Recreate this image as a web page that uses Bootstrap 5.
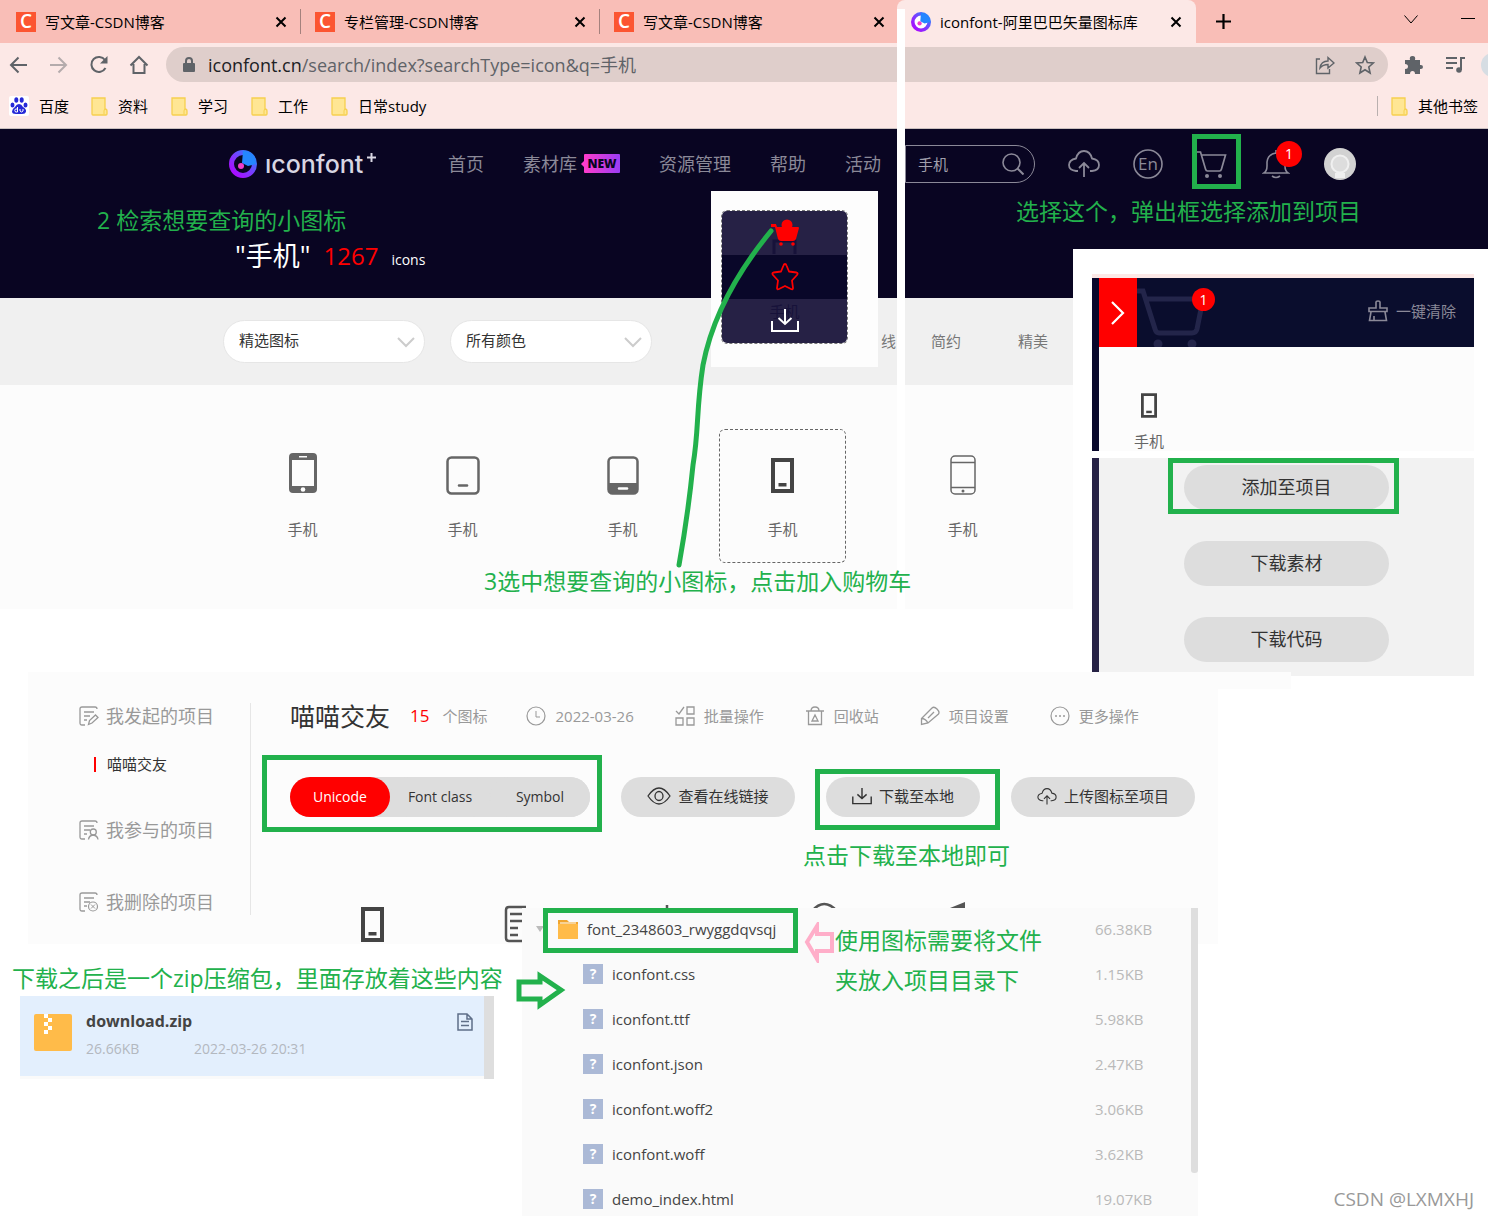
<!DOCTYPE html>
<html lang="zh-CN">
<head>
<meta charset="utf-8">
<meta name="viewport" content="width=device-width, initial-scale=1">
<title>iconfont-阿里巴巴矢量图标库</title>
<link rel="stylesheet" href="https://cdn.jsdelivr.net/npm/bootstrap@5.3.0/dist/css/bootstrap.min.css">
<style>
:root{--pen:#22b14c;--ink:#090522;--mute:#999;--pill:#ddd}
body{font-family:"Open Sans","Noto Sans CJK SC",sans-serif;font-size:15px;line-height:20px;color:#333;background:#fff;overflow-x:hidden}
a{color:inherit;text-decoration:none}
svg{display:block;flex:none}
.ln{fill:none;stroke:currentColor}
.board{min-height:1216px;overflow:hidden}
.plain{border:0;background:none;padding:0;color:inherit}
/* browser frame */
.tabstrip{background:#f9beb7;height:43px;color:#000}
.btab{flex:0 1 299px;height:43px;padding:0 12px 0 16px;gap:9px;position:relative}
.btab+.btab:not(.on)::before{content:"";position:absolute;left:1px;top:9px;height:25px;width:1px;background:#a5817d}
.btab.on{background:#fce8e6;border-radius:8px 8px 0 0;padding:0 14px}
.fav{width:20px;height:20px;background:#fc5531;color:#fff;font-weight:600;font-size:19px;line-height:19px;text-align:center}
.toolbar{background:#fce8e6;height:43px;padding:0 0 0 9px;color:#5f6368}
.urlbox{background:#dfcecb;border-radius:18px;height:35px;padding:0 13px 0 16px;margin-left:17px;font-size:18px}
.bookmarks{background:#fce8e6;height:43px;border-bottom:1px solid #c9bfbe;padding:0 10px 2px 9px;color:#000}
.bookmarks a{display:flex;align-items:center;width:80px;gap:10px;white-space:nowrap}
.bookmarks a+a{padding-left:2px}
/* site header */
.hero{background:var(--ink);height:169px;color:#8b8998;font-size:18px}
.heronav{height:69px;padding-left:229px}
.brand{font-family:Inter,sans-serif;font-weight:500;font-size:25px;line-height:30px;color:#d8d6e2;width:149px}
.newtag{background:linear-gradient(90deg,#ff3ccb,#9a3df5);color:var(--ink);font-size:12px;font-weight:800;line-height:19px;width:36px;text-align:center;border-radius:1px;position:relative}
.newtag::before{content:"";position:absolute;left:-3px;top:7px;border:solid transparent;border-width:3px 3px 3px 0;border-right-color:#ff3ccb}
.searchbox{width:130px;height:38px;border:1px solid #8b8998;border-radius:0 19px 19px 0;padding:0 10px 0 12px;margin-left:28px;font-size:15px}
.searchbox input{width:60px;color:#a09fac}
.tools{gap:32px;margin-left:33px}
.tools>a{width:32px;height:32px;display:flex;align-items:center;justify-content:center;position:relative}
.dot{position:absolute;background:red;color:#fff;border-radius:50%;text-align:center;font-size:14px}
.result{padding:37px 0 0 235px;gap:13px;color:#fff;line-height:34px}
/* filters and results */
.filters{background:#f0f0f0;height:87px;padding:0 0 1px 223px;color:#777}
.pick{position:relative;width:202px;margin-right:25px}
.pick .form-select{height:43px;border-radius:22px;border:1px solid #e6e6e6;background:#fff none;padding:0 40px 2px 15px;font-size:15px;color:#333}
.pick svg{position:absolute;right:10px;top:17px;color:#ccc;pointer-events:none}
.results{background:#fcfcfc;height:224px;padding:44px 0 0 239px;gap:33px;color:#666}
.tile{width:127px;height:134px;border:1px dashed transparent;border-radius:6px;padding-top:23px;text-align:center}
.tile svg{margin:0 auto 24px}
.tile.sel{border-color:#666}
.tile.sel svg{color:#444}
.tile.shift{margin-left:20px}
/* pieces laid over the page */
.over{position:absolute}
.note{color:var(--pen);font-size:23px;line-height:40px;white-space:nowrap}
.ring{position:absolute;border:5px solid var(--pen);pointer-events:none}
.seam{left:897px;top:9px;width:8px;height:600px;background:#fff}
.hovercard{left:711px;top:191px;width:167px;height:176px;background:#fdfdfd;padding:19px 30px 0 10px}
.hovercard .inner{border:1px dashed #777;border-radius:6px;overflow:hidden;height:134px;color:red}
.hovercard button{display:flex;align-items:center;justify-content:center;width:100%;height:44px;background:#262145;position:relative}
.hovercard button:nth-child(2){background:#090729}
.ghost{position:absolute;top:2px;left:0;right:0;text-align:center;color:#17123a}
.drawer{left:1073px;top:249px;right:0;background:#fff;padding:25px 14px 0 19px}
.drawhead{border-top:4px solid #fce8e6;background:#0a0d2d;height:73px;color:#8b8998}
.drawbody{border-left:7px solid #08072b;background:#fcfcfc;height:104px;padding:46px 0 0 35px}
.fold{width:38px;background:red;color:#fff;border:0}
.wide{width:205px;height:45px;border:0;border-radius:23px;background:var(--pill);font-size:18px;color:#333;padding:0 0 2px}
.drawfoot{background:#f2f2f2;border-left:7px solid #262145;margin-top:7px;padding:7px 0 14px 85px;gap:31px;position:relative}
/* project page */
.project{background:#fcfcfc;width:80%;height:272px;margin:63px 0 0 28px;position:relative;z-index:2}
.side{width:223px;padding:34px 0 0 51px;color:var(--mute);font-size:18px}
.side::after{content:"";position:absolute;left:222px;top:31px;height:212px;width:1px;background:#e6e6e6}
.side a{display:flex;align-items:center;gap:7px;white-space:nowrap}
.chip{height:40px;border:0;border-radius:20px;background:var(--pill);color:#333;display:flex;align-items:center;justify-content:center;gap:7px;white-space:nowrap;padding:0 0 2px}
.seg{background:var(--pill);border-radius:20px;margin-right:31px}
.seg .chip{width:100px;font-size:14px;padding:0}
.seg .chip.on{background:red;color:#fff}
.meta{height:30px;color:var(--mute);padding-left:39px;white-space:nowrap}
.meta a{display:flex;align-items:center;gap:9px}
.peek{left:0;top:230px}
/* downloads */
.lower{margin-top:-36px;position:relative;z-index:3}
.leftcol{width:522px;padding:50px 0 0 12px}
.zipcard{width:474px;margin-left:8px;border-right:10px solid #dedede;background:linear-gradient(#e3effd 80px,#fafafa 80px);height:83px;padding:0 11px 6px 14px}
.files{width:676px;height:308px;overflow:hidden;background:#fafafa;position:relative}
.files table{width:100%;margin:0}
.files td{height:45px;padding:0 0 3px;color:#444;vertical-align:middle}
.files td:last-child{width:103px;color:#b9b9b9}
.fname{display:flex;align-items:center;gap:9px;padding-left:61px}
.fname.dir{padding-left:14px;gap:9px}
.thumb{right:0;top:0;width:7px;height:265px;background:#dedede;border-radius:0 0 3px 3px}
.q{width:20px;height:20px;background:#abb9d6;color:#fff;font-weight:700;text-align:center;font-size:14px}
.wm{right:14px;top:1189px;font-size:19px;color:#999}
</style>
</head>
<body>
<svg width="0" height="0" class="position-absolute">
<defs>
<linearGradient id="lg" x1="0" y1="1" x2="1" y2="0"><stop offset="0" stop-color="#b400ff"/><stop offset=".5" stop-color="#7b3cff"/><stop offset="1" stop-color="#1f8dff"/></linearGradient>
<symbol id="logo" viewBox="0 0 28 28"><circle cx="14" cy="14" r="11.500" fill="none" stroke="url(#lg)" stroke-width="5"/><path d="M14 1l-1 12 6 3 8-2A13 13 0 0 0 14 1z" fill="#2487ff"/><circle cx="12" cy="16" r="3" fill="#f03ccb"/></symbol>
<symbol id="x" viewBox="0 0 12 12"><path d="M1.500 1.500l9 9M10.500 1.500l-9 9" stroke="#000" stroke-width="2"/></symbol>
<symbol id="folder" viewBox="0 0 17 19"><path d="M1 1h13v11q2 0 2 2v3q0 1-1 1H2q-1 0-1-1z" fill="#ffe694" stroke="#f6d04f" stroke-width="1.300"/><path d="M13 17v-3q0-2 1.500-2" fill="none" stroke="#f6d04f"/></symbol>
<symbol id="cart" viewBox="0 0 30 28"><path class="ln" stroke-width="1.700" d="M0 2h3.500l5 17q.5 2 2 2h12q1.500 0 2-2L28.500 5H4.500"/><circle cx="10" cy="26" r="2" fill="currentColor"/><circle cx="23" cy="26" r="2" fill="currentColor"/></symbol>
<symbol id="phone" viewBox="0 0 23 35"><path fill="currentColor" fill-rule="evenodd" d="M0 0h23v35H0zM4 4v27h15V4z"/><path fill="currentColor" d="M7.500 25h8v3.500h-8z"/></symbol>
<symbol id="cloud" viewBox="0 0 32 28"><path class="ln" stroke-width="1.800" d="M10 21H8Q1 20 1 15t7-6.500Q10 1 16 1t8 7.500q7 1 7 6.500t-7 6h-2M16 27V13M11 18l5-5 5 5"/></symbol>
<symbol id="down" viewBox="0 0 28 24"><path class="ln" stroke-width="2" d="M1 12v10h26V12M14 0v15M7.500 9l6.500 6 6.500-6"/></symbol>
<symbol id="chev" viewBox="0 0 18 11"><path class="ln" stroke-width="2" d="M1 1l8 8 8-8"/></symbol>
<symbol id="doc" viewBox="0 0 20 20"><path class="ln" stroke-width="1.300" d="M6 19H3q-2 0-2-2V3q0-2 2-2h13q2 0 2 2M5 6h10M5 10h6M5 14h3"/></symbol>
</defs>
</svg>
<main class="board position-relative">
<header>
 <div class="tabstrip d-flex align-items-center">
  <div class="btab d-flex align-items-center"><span class="fav">C</span><span class="flex-grow-1">写文章-CSDN博客</span><button class="plain" aria-label="关闭"><svg width="12" height="12"><use href="#x"/></svg></button></div>
  <div class="btab d-flex align-items-center"><span class="fav">C</span><span class="flex-grow-1">专栏管理-CSDN博客</span><button class="plain" aria-label="关闭"><svg width="12" height="12"><use href="#x"/></svg></button></div>
  <div class="btab d-flex align-items-center"><span class="fav">C</span><span class="flex-grow-1">写文章-CSDN博客</span><button class="plain" aria-label="关闭"><svg width="12" height="12"><use href="#x"/></svg></button></div>
  <div class="btab on d-flex align-items-center"><svg width="20" height="20"><circle cx="10" cy="10" r="8" fill="#fff"/><use href="#logo" width="20" height="20"/></svg><span class="flex-grow-1 text-nowrap">iconfont-阿里巴巴矢量图标库</span><button class="plain" aria-label="关闭"><svg width="12" height="12"><use href="#x"/></svg></button></div>
  <button class="plain ms-3 ps-1" aria-label="新标签页"><svg width="15" height="15"><path d="M7.500 0v15M0 7.500h15" stroke="#000" stroke-width="2.200"/></svg></button>
  <button class="plain ms-auto" aria-label="标签搜索"><svg width="14" height="13"><path class="ln" d="M.5.5L7 8 13.500.5"/></svg></button>
  <button class="plain ps-3" style="padding-right:13px" aria-label="最小化"><svg width="41" height="9" viewBox="-27 0 41 9"><path class="ln" d="M0 1.500h14"/></svg></button>
 </div>
 <div class="toolbar d-flex align-items-center">
  <div class="d-flex align-items-center" style="gap:20px">
   <svg width="20" height="20"><path class="ln" stroke-width="2" d="M18 10H2M9.500 2.500L2 10l7.500 7.500"/></svg>
   <svg width="20" height="20" opacity=".45"><path class="ln" stroke-width="2" d="M1 10h16M9.500 2.500L17 10l-7.500 7.500"/></svg>
   <svg width="20" height="20"><path class="ln" stroke-width="2" d="M16.500 13A7.500 7.500 0 1 1 16 5"/><path fill="currentColor" d="M18.500 1v7.500H11z"/></svg>
   <svg width="20" height="20"><path class="ln" stroke-width="2" d="M1.500 10.500L10 2l8.500 8.500M4.500 9v9h11V9"/></svg>
  </div>
  <div class="urlbox d-flex align-items-center flex-grow-1">
   <svg width="14" height="16"><rect x="1" y="6" width="12" height="9" rx="1" fill="currentColor"/><path class="ln" stroke-width="2" d="M4 7V4q0-3 3-3t3 3v3"/></svg>
   <span class="ms-2 ps-1 text-nowrap flex-grow-1"><span style="color:#202124">iconfont.cn</span>/search/index?searchType=icon&amp;q=手机</span>
   <svg width="20" height="20" class="me-3"><path class="ln" stroke-width="1.400" d="M5 4H1.500v14.500h13V14M5 13q1-7 8-7V2.500L19 8l-6 5v-3.500Q8 9.500 5 13z"/></svg>
   <svg width="20" height="20" class="ms-1"><path class="ln" stroke-width="1.600" d="M10 2l2.300 5.500 6 .5-4.500 4 1.300 6-5.100-3.200L4.900 18l1.300-6L1.700 8l6-.5z"/></svg>
  </div>
  <svg width="20" height="20" class="ms-3"><path fill="currentColor" d="M1 5h5q-1-4 2.500-4T11 5h5v5q3-.5 3 2t-3 2v5h-5q0-3-2.500-3T6 19H1v-5q3 0 3-2.500T1 9z"/></svg>
  <svg width="20" height="18" class="me-3" style="margin-left:21px" viewBox="-1 0 20 18"><path class="ln" stroke-width="2" d="M0 2h11M0 7h11M0 12h7M19 2h-4v12"/><circle cx="13" cy="14" r="2.800" fill="currentColor"/></svg>
  <svg width="7" height="24"><circle cx="12" cy="12" r="12" fill="#d6dde3"/></svg>
 </div>
 <nav class="bookmarks d-flex align-items-center">
  <a href="#"><svg width="20" height="20"><rect width="20" height="20" rx="2" fill="#fff"/><g fill="#2529d8"><ellipse cx="3.500" cy="9" rx="2" ry="2.600"/><ellipse cx="7.300" cy="4" rx="2" ry="2.800"/><ellipse cx="12.700" cy="4" rx="2" ry="2.800"/><ellipse cx="16.500" cy="9" rx="2" ry="2.600"/><path d="M10 8q2.500 0 4 3 3.500 2 3 4.500T13 18H7q-4 0-4-2.500t3-4.500q1.500-3 4-3z"/></g><path d="M8.500 11v5H6.500q-1.500-2 0-3h2M11 13v2q1.500 2 3 0v-2" fill="none" stroke="#fff"/></svg><span>百度</span></a>
  <a href="#"><svg width="17" height="19"><use href="#folder"/></svg><span>资料</span></a>
  <a href="#"><svg width="17" height="19"><use href="#folder"/></svg><span>学习</span></a>
  <a href="#"><svg width="17" height="19"><use href="#folder"/></svg><span>工作</span></a>
  <a href="#"><svg width="17" height="19"><use href="#folder"/></svg><span>日常study</span></a>
  <span class="ms-auto" style="width:1px;height:20px;background:#b9b0af;margin-right:13px"></span>
  <a href="#" class="w-auto"><svg width="17" height="19"><use href="#folder"/></svg><span>其他书签</span></a>
 </nav>
</header>

<section class="hero">
 <div class="heronav d-flex align-items-center text-nowrap">
  <svg width="28" height="28"><use href="#logo"/></svg>
  <a href="#" class="brand d-flex ms-2">ıconfont<svg class="ms-1 mt-1" width="9" height="9"><path class="ln" stroke-width="2" d="M4.500 0v9M0 4.500h9"/></svg></a>
  <nav class="d-flex align-items-center" style="gap:39px;margin-left:34px">
   <a href="#">首页</a>
   <a href="#" class="d-flex align-items-center" style="gap:7px">素材库<span class="newtag">NEW</span></a>
   <a href="#">资源管理</a><a href="#">帮助</a><a href="#">活动</a>
  </nav>
  <form class="searchbox d-flex align-items-center justify-content-between" style="margin-left:24px">
   <input class="plain" aria-label="搜索" value="手机">
   <button class="plain" type="button" aria-label="搜索"><svg width="22" height="22"><circle class="ln" stroke-width="1.600" cx="9.500" cy="9.500" r="8.500"/><path class="ln" stroke-width="2" d="M15.500 15.500l6 6"/></svg></button>
  </form>
  <div class="tools d-flex align-items-center">
   <a href="#" aria-label="上传"><svg width="32" height="28"><use href="#cloud"/></svg></a>
   <a href="#"><svg width="32" height="32"><circle class="ln" stroke-width="1.600" cx="16" cy="16" r="14"/><text x="16" y="22" text-anchor="middle" font-size="17" fill="currentColor">En</text></svg></a>
   <a href="#" aria-label="购物车"><svg width="30" height="28"><use href="#cart"/></svg><span class="ring" style="left:-4px;top:-14px;width:49px;height:55px"></span></a>
   <a href="#" aria-label="消息"><svg width="28" height="30"><path class="ln" stroke-width="1.600" d="M2 24q3-2 3-7v-4q1-8 9-9 8 1 9 9v4q0 5 3 7zM10 27q4 3 8 0M14 1v3"/></svg><span class="dot" style="left:16px;top:-7px;width:26px;height:26px;line-height:26px">1</span></a>
   <a href="#" aria-label="头像"><svg width="32" height="32"><circle cx="16" cy="16" r="16" fill="#d2d2d2"/><circle cx="16" cy="16" r="8.500" fill="#ddd" stroke="#f0f0f0" stroke-width="2"/><path d="M11 25h10v5H11z" fill="#f0f0f0"/></svg></a>
  </div>
 </div>
 <div class="result d-flex align-items-center"><span style="font-size:27px">"手机"</span><span style="font-size:24px;color:red">1267</span><span class="pt-2" style="font-size:14px">icons</span></div>
</section>

<section class="filters d-flex align-items-center">
 <div class="pick"><select class="form-select" aria-label="图标范围"><option>精选图标</option></select><svg width="18" height="11"><use href="#chev"/></svg></div>
 <div class="pick"><select class="form-select" aria-label="颜色"><option>所有颜色</option></select><svg width="18" height="11"><use href="#chev"/></svg></div>
 <a href="#" style="margin-left:204px">线</a><a href="#" style="margin-left:35px">简约</a><a href="#" style="margin-left:57px">精美</a>
</section>

<section class="results d-flex">
 <a href="#" class="tile"><svg width="28" height="42"><path fill="currentColor" fill-rule="evenodd" d="M4 0h20q4 0 4 4v32q0 4-4 4H4q-4 0-4-4V4q0-4 4-4zM3 7v26h22V7zM10 3v1.500h8V3z"/><circle cx="14" cy="36.500" r="2.300" fill="#fff"/></svg>手机</a>
 <a href="#" class="tile"><svg width="34" height="42"><rect class="ln" stroke-width="2.500" x="1.500" y="4.500" width="31" height="36" rx="4"/><path class="ln" stroke-width="2.500" stroke-linecap="round" d="M13 32.500h8"/></svg>手机</a>
 <a href="#" class="tile"><svg width="32" height="42"><rect class="ln" stroke-width="2.500" x="1.500" y="4.500" width="29" height="36" rx="4"/><path fill="currentColor" d="M2 30h28v7q0 3-3 3H5q-3 0-3-3z"/><path stroke="#fff" stroke-width="2.500" stroke-linecap="round" d="M12 35.500h8"/></svg>手机</a>
 <a href="#" class="tile sel"><svg width="23" height="42"><use href="#phone" y="5" width="23" height="35"/></svg>手机</a>
 <a href="#" class="tile shift"><svg width="26" height="42"><rect class="ln" stroke-width="1.500" x="1" y="3" width="24" height="38" rx="4"/><path class="ln" stroke-width="1.300" d="M1 9.500h24M1 34.500h24"/><circle cx="13" cy="38" r="1.500" fill="currentColor"/></svg>手机</a>
</section>

<div class="over seam"></div>
<div class="over hovercard"><div class="inner">
 <button class="plain" aria-label="加入购物车"><svg width="30" height="42" viewBox="0 0 30 42"><path fill="none" stroke="#17123a" stroke-width="3" d="M4 44V29h21v15"/><circle cx="17" cy="13" r="5.500" fill="red"/><path fill="red" d="M1 12h5l1 3h21q1 0 1 1l-3 11q-1 2-3 2H11q-2 0-3-2L5 15H1z"/><circle cx="11" cy="32" r="1.800" fill="red"/><circle cx="23" cy="32" r="1.800" fill="red"/></svg></button>
 <button class="plain" aria-label="收藏"><svg width="30" height="28"><path class="ln" stroke-width="1.800" stroke-linejoin="round" d="M15 1q1 0 1.500 1.500L19 8.500l7.500 1q2 .5.500 2.500l-5 5.500 1 7.500q0 2-2 1L15 23l-6 3q-2 1-2-1l1-7.500L3 12q-1.500-2 .5-2.500l7.500-1 2.500-6Q14 1 15 1z"/></svg></button>
 <button class="plain text-white" aria-label="下载"><span class="ghost">手机</span><svg class="position-relative" width="28" height="24"><use href="#down"/></svg></button>
</div></div>

<aside class="over drawer">
 <div class="drawhead d-flex align-items-center position-relative">
  <span style="width:7px;background:#08072b" class="align-self-stretch"></span>
  <button class="fold align-self-stretch d-flex align-items-center justify-content-center p-0" aria-label="收起"><svg width="14" height="24"><path class="ln" stroke-width="2.200" d="M1 1l11 11L1 23"/></svg></button>
  <svg width="70" height="60" class="align-self-end" style="color:#23254a"><path class="ln" stroke-width="5" d="M0 4h6l12 38q1 4 4 4h33q4 0 5-4l6-30H10"/><circle cx="21" cy="57" r="4.500" fill="currentColor"/><circle cx="55" cy="57" r="4.500" fill="currentColor"/></svg>
  <span class="dot" style="left:100px;top:10px;width:23px;height:23px;line-height:23px">1</span>
  <button class="plain d-flex align-items-center ms-auto gap-2 pb-1" style="margin-right:18px"><svg width="20" height="22"><path class="ln" stroke-width="1.600" d="M8 8V2q0-1 2-1t2 1v6h7v3.500H1V8zM3 12L1.500 20.500h17L17 12M6 20V16"/></svg>一键清除</button>
 </div>
 <div class="drawbody d-flex"><a href="#" class="text-center" style="color:#666"><svg class="mx-auto" style="color:#444;margin-bottom:13px" width="16" height="25"><use href="#phone"/></svg>手机</a></div>
 <div class="drawfoot d-flex flex-column">
  <button class="wide">添加至项目</button><button class="wide">下载素材</button><button class="wide">下载代码</button>
  <span class="ring" style="left:69px;top:0;width:231px;height:56px"></span>
 </div>
</aside>

<section class="project d-flex">
 <div class="side flex-shrink-0">
  <a href="#"><svg width="20" height="20"><use href="#doc"/><path class="ln" stroke-width="1.300" d="M9.500 18.500l1-4 6-5.500 2.500 2.500-6 5.500z"/></svg>我发起的项目</a>
  <a href="#" style="font-size:15px;color:#333;margin:28px 0 0 15px;gap:11px"><span style="width:2px;height:15px;background:red"></span>喵喵交友</a>
  <a href="#" style="margin-top:46px"><svg width="20" height="20"><use href="#doc"/><path class="ln" stroke-width="1.300" d="M9.500 19.500q.5-4 4.500-4.500 4.500.5 5 4.500"/><circle class="ln" stroke-width="1.300" cx="14.300" cy="12" r="3"/></svg>我参与的项目</a>
  <a href="#" style="margin-top:52px"><svg width="20" height="20"><use href="#doc"/><circle class="ln" stroke-width="1.200" cx="14" cy="14.500" r="4.500"/><path class="ln" d="M12 12.500l4 4m0-4l-4 4"/></svg>我删除的项目</a>
 </div>
 <div class="flex-grow-1" style="padding-top:29px">
  <div class="meta d-flex align-items-center">
   <span style="font-size:25px;color:#333;line-height:30px">喵喵交友</span><span style="color:red;font-size:17px;margin:0 13px 0 20px">15</span><span style="margin-right:39px">个图标</span>
   <div class="d-flex" style="gap:41px">
    <span class="d-flex align-items-center" style="gap:9px"><svg width="20" height="20"><circle class="ln" stroke-width="1.200" cx="10" cy="10" r="9"/><path class="ln" d="M10 5v6h4"/></svg>2022-03-26</span>
    <a href="#"><svg width="20" height="20"><path class="ln" stroke-width="1.300" d="M1 5l3 3 5-7M12 1h7v7h-7zM1 12h7v7H1zM12 12h7v7h-7z"/></svg>批量操作</a>
    <a href="#"><svg width="20" height="20"><path class="ln" stroke-width="1.300" d="M1 5h18M3.500 5v13.500h13V5M6 5q0-4 4-4t4 4M7 15l3-6 3 6z"/></svg>回收站</a>
    <a href="#"><svg width="20" height="20"><path class="ln" stroke-width="1.300" d="M1.500 18.500v-6L12 2q2-2 5 1t1.500 5L8 17zM1.500 12.500q4 0 6.500 4.500M8 12l6-6"/></svg>项目设置</a>
    <a href="#"><svg width="20" height="20"><circle class="ln" stroke-width="1.200" cx="10" cy="10" r="9"/><path stroke="currentColor" stroke-width="1.500" stroke-dasharray="2 2" d="M5 10h10"/></svg>更多操作</a>
   </div>
  </div>
  <div class="d-flex align-items-center position-relative" style="padding:46px 0 0 39px">
   <div class="seg d-flex"><button class="chip on">Unicode</button><button class="chip">Font class</button><button class="chip">Symbol</button></div>
   <button class="chip" style="width:174px"><svg width="24" height="18"><path class="ln" stroke-width="1.300" d="M1 9q11-16 22 0-11 16-22 0z"/><ellipse class="ln" stroke-width="1.300" cx="12" cy="9" rx="4" ry="4.500"/></svg>查看在线链接</button>
   <button class="chip" style="width:154px;margin:0 31px"><svg width="20" height="17"><use href="#down"/></svg>下载至本地</button>
   <button class="chip" style="width:184px"><svg width="20" height="17"><use href="#cloud"/></svg>上传图标至项目</button>
   <span class="ring" style="left:11px;top:24px;width:340px;height:77px"></span>
   <span class="ring" style="left:564px;top:38px;width:185px;height:61px"></span>
  </div>
 </div>
 <svg class="over peek" width="1190" height="42" style="color:#555"><use href="#phone" x="333" y="5" width="23" height="35" color="#444"/><path class="ln" stroke-width="2.500" d="M498 5h-17q-3 0-3 3v28q0 3 3 3h14M482 12h12M482 19h12M482 26h8M482 33h8M639 3v6M784 9q12-14 25 0"/><path fill="currentColor" d="M917 8l20-8v8z"/></svg>
 <span class="over" style="left:100%;top:0;width:73px;height:17px;background:#fcfcfc"></span>
</section>

<section class="lower d-flex">
 <div class="leftcol flex-shrink-0">
  <div class="note" style="height:38px">下载之后是一个zip压缩包，里面存放着这些内容</div>
  <div class="zipcard d-flex align-items-center">
   <svg width="38" height="37" class="mb-1"><rect width="38" height="37" rx="2" fill="#ffbb49"/><path fill="#fff" d="M10 0h4v4h4v4h-4v4h4v4h-4v4h-4v-4h4v-4h-4V8h4V4h-4z"/></svg>
   <div class="flex-grow-1" style="margin-left:14px"><div class="fw-bold" style="font-size:16px;color:#444;line-height:28px">download.zip</div><div class="d-flex" style="color:#b3b8bf;font-size:14px;line-height:28px"><span style="width:108px">26.66KB</span><span>2022-03-26 20:31</span></div></div>
   <svg width="16" height="18" class="align-self-start" style="color:#5f6f88;margin-top:17px"><path class="ln" stroke-width="1.500" d="M1 1h9l5 5v11H1zM10 1v5h5M4 8.500h8M4 12.500h8"/></svg>
  </div>
 </div>
 <div class="files flex-shrink-0">
  <table><tbody>
   <tr><td><div class="fname dir"><svg width="8" height="6"><path fill="#bbb" d="M0 0h8L4 6z"/></svg><svg width="20" height="20" style="margin-left:5px"><path fill="#f0a52f" d="M0 1h9l2 2h9v6H0z"/><path fill="#ffbb49" d="M0 5h20v15H0z"/><path stroke="#fff" d="M2 4h16"/></svg>font_2348603_rwyggdqvsqj</div></td><td>66.38KB</td></tr>
   <tr><td><div class="fname"><span class="q">?</span>iconfont.css</div></td><td>1.15KB</td></tr>
   <tr><td><div class="fname"><span class="q">?</span>iconfont.ttf</div></td><td>5.98KB</td></tr>
   <tr><td><div class="fname"><span class="q">?</span>iconfont.json</div></td><td>2.47KB</td></tr>
   <tr><td><div class="fname"><span class="q">?</span>iconfont.woff2</div></td><td>3.06KB</td></tr>
   <tr><td><div class="fname"><span class="q">?</span>iconfont.woff</div></td><td>3.62KB</td></tr>
   <tr><td><div class="fname"><span class="q">?</span>demo_index.html</div></td><td>19.07KB</td></tr>
  </tbody></table>
  <span class="ring" style="left:21px;top:0;width:255px;height:45px"></span>
  <span class="over thumb"></span>
  <svg class="over" style="left:282px;top:14px" width="31" height="41"><path fill="none" stroke="#ffaec9" stroke-width="4" d="M3 20L13 4v8h15v17H13v8z"/></svg>
  <div class="over note" style="left:313px;top:12px">使用图标需要将文件<br>夹放入项目目录下</div>
 </div>
 <svg class="over" style="left:516px;top:63px" width="50" height="39"><path fill="none" stroke="#22b14c" stroke-width="5" d="M3 11h21V5l21 14-21 15v-6H3z"/></svg>
</section>

<div class="over note" style="left:97px;top:200px">2 检索想要查询的小图标</div>
<div class="over note" style="left:1016px;top:191px">选择这个，弹出框选择添加到项目</div>
<div class="over note" style="left:484px;top:561px">3选中想要查询的小图标，点击加入购物车</div>
<div class="over note" style="left:803px;top:835px;z-index:4">点击下载至本地即可</div>
<svg class="over" style="left:670px;top:225px;pointer-events:none" width="110" height="350" viewBox="670 225 110 350"><path fill="none" stroke="#22b14c" stroke-width="5" stroke-linecap="round" d="M771 231Q716 298 703 365C696 410 699 430 693 465Q688 515 679 565"/></svg>
<div class="over wm">CSDN @LXMXHJ</div>
</main>
<script src="https://cdn.jsdelivr.net/npm/bootstrap@5.3.0/dist/js/bootstrap.bundle.min.js"></script>
</body>
</html>
